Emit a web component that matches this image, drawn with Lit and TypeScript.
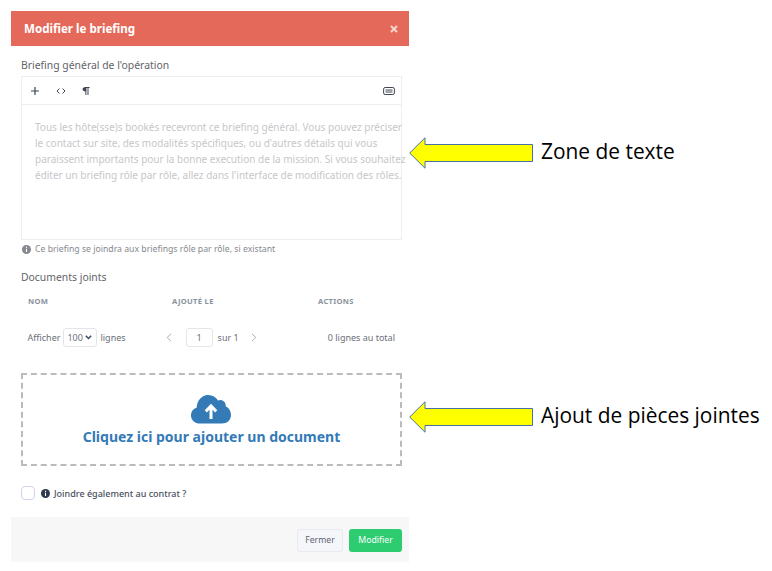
import { html, css, LitElement } from 'lit';
import { customElement } from 'lit/decorators.js';

const arrow = html`<svg class="arrow-svg" width="124" height="32" viewBox="0 0 124 32">
	<path d="M.7 16 L16 .8 V7.5 H123.5 V24.5 H16 V31.2 Z" fill="#ffff00" stroke="#4472a8" stroke-width="1"/>
</svg>`;

@customElement('app-root')
export class AppRoot extends LitElement {
	static styles = css`
    :host {
      display: block;
      position: relative;
      width: 772px;
      height: 571px;
      background: #fff;
      overflow: hidden;
      font-family: "Noto Sans", "Open Sans", sans-serif;
      color: #5e6470;
    }
    .page {
      padding: 11px 0 0 11px;
    }
    .modal {
      width: 398px;
      height: 551px;
      display: flex;
      flex-direction: column;
    }
    .head {
      height: 35px;
      flex: none;
      background: #e4695a;
      color: #fff;
      display: flex;
      align-items: center;
      justify-content: space-between;
      padding: 0 11px 0 13px;
      font-size: 11.6px;
      font-weight: 700;
    }
    .close {
      width: 8px;
      height: 8px;
      display: block;
    }
    .body {
      flex: 1;
      padding: 12px 7px 0 10px;
      display: flex;
      flex-direction: column;
    }
    .label {
      font-size: 10.4px;
      line-height: 14px;
      color: #5f6368;
    }
    .editor {
      margin-top: 4px;
      height: 162px;
      border: 1px solid #eeeeee;
      display: flex;
      flex-direction: column;
    }
    .toolbar {
      height: 27px;
      flex: none;
      border-bottom: 1px solid #eeeeee;
      display: flex;
      align-items: center;
      padding: 0 6px 0 8px;
      gap: 16px;
      color: #3d4452;
    }
    .toolbar svg {
      display: block;
    }
    .toolbar .kb {
      margin-left: auto;
    }
    .placeholder {
      padding: 14px 0 0 13px;
      width: 375px;
      font-size: 10px;
      line-height: 16px;
      color: #c6c7ca;
      white-space: nowrap;
    }
    .hint {
      margin-top: 3px;
      display: flex;
      align-items: center;
      gap: 4px;
      padding-left: 1px;
      font-size: 8.7px;
      line-height: 13px;
      color: #85898f;
    }
    .docs {
      margin-top: 14px;
    }
    .cols {
      margin-top: 12px;
      display: grid;
      grid-template-columns: 144px 146px 1fr;
      padding-left: 7px;
      font-size: 7.6px;
      line-height: 11px;
      font-weight: 700;
      letter-spacing: 0.3px;
      color: #8a929c;
    }
    .pager {
      margin-top: 21px;
      height: 19px;
      display: flex;
      align-items: center;
      padding: 0 7px 0 6.5px;
      font-size: 9px;
      color: #6b7079;
    }
    .select {
      margin: 0 3px 0 3px;
      width: 34px;
      height: 19px;
      box-sizing: border-box;
      border: 1px solid #e3e5ea;
      border-radius: 3px;
      display: flex;
      align-items: center;
      justify-content: space-between;
      padding: 0 4px 0 3px;
    }
    .nav {
      margin-left: 40px;
      display: flex;
      align-items: center;
    }
    .page-box {
      margin: 0 5px 0 14px;
      width: 27px;
      height: 19px;
      box-sizing: border-box;
      border: 1px solid #e3e5ea;
      border-radius: 3px;
      display: flex;
      align-items: center;
      justify-content: center;
    }
    .nav .next {
      margin-left: 12px;
    }
    .total {
      margin-left: auto;
    }
    .drop {
      margin: 26px 0 0;
      height: 93px;
      box-sizing: border-box;
      border: 2px dashed #bbbbbb;
      display: flex;
      flex-direction: column;
      align-items: center;
      color: #337ab7;
      padding-top: 20px;
    }
    .drop svg {
      display: block;
      margin-right: 1px;
    }
    .drop span {
      margin-top: 3px;
      font-size: 14px;
      line-height: 19px;
      font-weight: 700;
    }
    .joindre {
      margin-top: 20px;
      display: flex;
      align-items: center;
      font-size: 9px;
      font-weight: 500;
      color: #4a5160;
    }
    .check {
      width: 14px;
      height: 14px;
      box-sizing: border-box;
      border: 1px solid #cfd3ee;
      border-radius: 4px;
      margin-right: 6px;
    }
    .joindre svg {
      margin-right: 4px;
    }
    .foot {
      height: 45px;
      flex: none;
      box-sizing: border-box;
      background: #f7f7f7;
      display: flex;
      align-items: center;
      justify-content: flex-end;
      gap: 6px;
      padding: 1px 7px 0;
    }
    .btn {
      height: 23px;
      box-sizing: border-box;
      border-radius: 3px;
      display: flex;
      align-items: center;
      justify-content: center;
      font-size: 8.7px;
    }
    .btn.close-btn {
      width: 46px;
      background: #f5f6fa;
      border: 1px solid #e8eaf0;
      color: #5e6470;
    }
    .btn.ok {
      width: 53px;
      background: #2ecc71;
      color: #fff;
    }
    .note {
      position: absolute;
      display: flex;
      align-items: center;
      gap: 8px;
      left: 409px;
      color: #000;
      font-family: "Open Sans", sans-serif;
      font-size: 20.9px;
      line-height: 26px;
      white-space: nowrap;
    }
    .note span {
      margin-bottom: 4px;
    }
    .note.one {
      top: 137px;
    }
    .note.two {
      top: 401px;
    }
    .arrow-svg {
      display: block;
    }
  `;

	render() {
		return html`
      <div class="page">
        <div class="modal">
          <div class="head">
            <span>Modifier le briefing</span>
            <svg class="close" viewBox="0 0 8 8"><path d="M1 1 L7 7 M7 1 L1 7" stroke="#f6d5d0" stroke-width="2"/></svg>
          </div>
          <div class="body">
            <div class="label">Briefing général de l'opération</div>
            <div class="editor">
              <div class="toolbar">
                <svg width="10" height="10" viewBox="0 0 10 10"><path d="M5 1 V9 M1 5 H9" stroke="currentColor" stroke-width="1.2"/></svg>
                <svg width="10" height="10" viewBox="0 0 10 10"><path d="M3.5 2.5 L1 5 L3.5 7.5 M6.5 2.5 L9 5 L6.5 7.5" fill="none" stroke="currentColor" stroke-width="1"/></svg>
                <svg width="8" height="10" viewBox="0 0 8 10"><path d="M3.4 5.4 C1.6 5.4 .6 4.4 .6 3.2 C.6 2 1.6 1 3.4 1 H7.6 V2 H6.5 V9 H5.5 V2 H4.4 V9 H3.4 Z" fill="currentColor"/></svg>
                <svg class="kb" width="12" height="10" viewBox="0 0 12 10"><rect x=".6" y="1.5" width="10.8" height="7" rx="1.6" fill="none" stroke="currentColor" stroke-width="1"/><path d="M2.5 4 H9.5 M2.5 6 H9.5" stroke="currentColor" stroke-width="1"/></svg>
              </div>
              <div class="placeholder">Tous les hôte(sse)s bookés recevront ce briefing général. Vous pouvez préciser<br>le contact sur site, des modalités spécifiques, ou d'autres détails qui vous<br>paraissent importants pour la bonne execution de la mission. Si vous souhaitez<br>éditer un briefing rôle par rôle, allez dans l'interface de modification des rôles.</div>
            </div>
            <div class="hint">
              <svg width="9" height="9" viewBox="0 0 9 9"><circle cx="4.5" cy="4.5" r="4.5" fill="#85898f"/><path d="M4.5 3.8 V7 M4.5 1.8 V2.9" stroke="#fff" stroke-width="1.1"/></svg>
              <span>Ce briefing se joindra aux briefings rôle par rôle, si existant</span>
            </div>
            <div class="label docs">Documents joints</div>
            <div class="cols"><span>NOM</span><span>AJOUTÉ LE</span><span>ACTIONS</span></div>
            <div class="pager">
              <span>Afficher</span>
              <div class="select">
                <span>100</span>
                <svg width="7" height="5" viewBox="0 0 7 5"><path d="M.8 .8 L3.5 3.5 L6.2 .8" fill="none" stroke="#3d4452" stroke-width="1.4"/></svg>
              </div>
              <span>lignes</span>
              <div class="nav">
                <svg width="6" height="9" viewBox="0 0 6 9"><path d="M5 .8 L1.2 4.5 L5 8.2" fill="none" stroke="#a9adb3" stroke-width="1"/></svg>
                <div class="page-box">1</div>
                <span>sur 1</span>
                <svg class="next" width="6" height="9" viewBox="0 0 6 9"><path d="M1 .8 L4.8 4.5 L1 8.2" fill="none" stroke="#a9adb3" stroke-width="1"/></svg>
              </div>
              <span class="total">0 lignes au total</span>
            </div>
            <div class="drop">
              <svg width="40" height="29" viewBox="0 0 40 29">
                <path d="M9 28.5 C3.8 28.5 0 25 0 20.4 C0 16.6 2.4 13.8 5.6 12.8 C6 5.6 10.8 0 17 0 C21.6 0 25 2.2 27 5.6 C28.2 5 29.6 4.8 30.8 5.2 C33.6 6 35 8.4 34.8 11.6 C38 13 40 16.2 40 20 C40 25 36 28.5 31 28.5 Z" fill="#337ab7"/>
                <path d="M20 24 V11.4 M14.8 16.4 L20 11 L25.2 16.4" fill="none" stroke="#fff" stroke-width="3"/>
              </svg>
              <span>Cliquez ici pour ajouter un document</span>
            </div>
            <div class="joindre">
              <div class="check"></div>
              <svg width="9" height="9" viewBox="0 0 9 9"><circle cx="4.5" cy="4.5" r="4.5" fill="#2f3a4f"/><path d="M4.5 3.8 V7 M4.5 1.8 V2.9" stroke="#fff" stroke-width="1.1"/></svg>
              <span>Joindre également au contrat ?</span>
            </div>
          </div>
          <div class="foot">
            <div class="btn close-btn">Fermer</div>
            <div class="btn ok">Modifier</div>
          </div>
        </div>
      </div>
      <div class="note one">${arrow}<span>Zone de texte</span></div>
      <div class="note two">${arrow}<span>Ajout de pièces jointes</span></div>
    `;
	}
}
